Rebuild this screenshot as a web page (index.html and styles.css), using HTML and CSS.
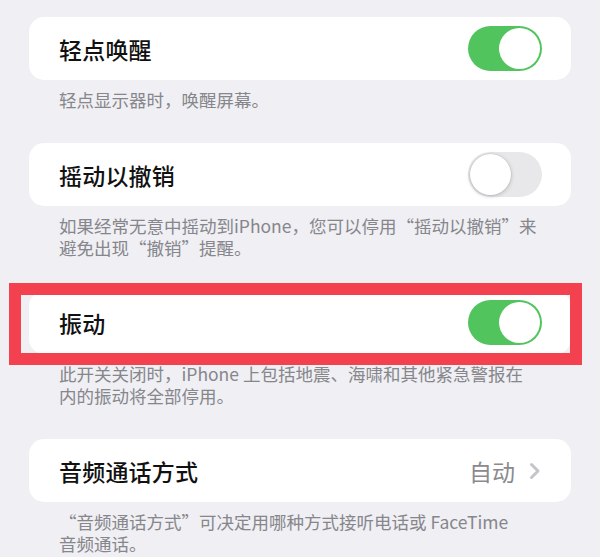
FILE: index.html
```html
<!DOCTYPE html>
<html lang="zh-CN">
<head>
<meta charset="utf-8">
<link rel="stylesheet" href="styles.css">
</head>
<body>
<div class="page">
  <section class="group">
    <div class="card">
      <span class="title">轻点唤醒</span>
      <span class="toggle on"><span class="knob"></span></span>
    </div>
    <p class="footer">轻点显示器时，唤醒屏幕。</p>
  </section>

  <section class="group">
    <div class="card">
      <span class="title">摇动以撤销</span>
      <span class="toggle off"><span class="knob"></span></span>
    </div>
    <p class="footer"><span class="line">如果经常无意中摇动到iPhone，您可以停用“摇动以撤销”来</span><span class="line">避免出现“撤销”提醒。</span></p>
  </section>

  <section class="group">
    <div class="highlight-wrap">
      <div class="card">
        <span class="title">振动</span>
        <span class="toggle on"><span class="knob"></span></span>
      </div>
      <div class="highlight"></div>
    </div>
    <p class="footer"><span class="line">此开关关闭时，iPhone 上包括地震、海啸和其他紧急警报在</span><span class="line">内的振动将全部停用。</span></p>
  </section>

  <section class="group">
    <div class="card">
      <span class="title">音频通话方式</span>
      <span class="detail">
        <span class="value">自动</span>
        <svg class="chevron" width="12" height="18" viewBox="0 0 12 18"><path d="M2.5 2.5 L9 9 L2.5 15.5" fill="none" stroke="#c5c5c8" stroke-width="3" stroke-linecap="round" stroke-linejoin="round"/></svg>
      </span>
    </div>
    <p class="footer"><span class="line">“音频通话方式”可决定用哪种方式接听电话或 FaceTime</span><span class="line">音频通话。</span></p>
  </section>
</div>
</body>
</html>
```

FILE: styles.css
```css
html, body {
  margin: 0;
  padding: 0;
  background: #efeff4;
}
body {
  font-family: "Noto Sans CJK SC", "Noto Sans", sans-serif;
  width: 600px;
  height: 557px;
  overflow: hidden;
}
.page {
  padding: 17px 29px 0 29px;
  display: flex;
  flex-direction: column;
}
.group {
  display: flex;
  flex-direction: column;
  margin-bottom: 32px;
}
.group:last-child {
  margin-bottom: 0;
}
.card {
  background: #ffffff;
  border-radius: 15px;
  height: 63px;
  display: flex;
  align-items: center;
  justify-content: space-between;
  padding: 0 29px 0 30px;
}
.title {
  font-size: 23px;
  font-weight: 500;
  color: #111111;
  letter-spacing: 0.2px;
}
.toggle {
  width: 74px;
  height: 45px;
  border-radius: 23px;
  position: relative;
  flex: none;
}
.toggle.on {
  background: #52c45e;
}
.toggle.off {
  background: #e8e8ea;
}
.knob {
  position: absolute;
  top: 2px;
  width: 41px;
  height: 41px;
  border-radius: 50%;
  background: #ffffff;
}
.toggle.on .knob {
  right: 2px;
}
.toggle.off .knob {
  left: 2px;
  box-shadow: 0 1px 4px rgba(0,0,0,0.22), 0 0 0 0.5px rgba(0,0,0,0.08);
}
.detail {
  display: flex;
  align-items: center;
  gap: 14px;
}
.value {
  font-size: 23px;
  color: #8a8a8e;
}
.chevron {
  display: block;
  margin-right: 1px;
}
.footer {
  margin: 0;
  padding: 9px 30px 0 30px;
  font-size: 17.5px;
  line-height: 22px;
  color: #86868b;
}
.line {
  display: block;
  height: 22px;
  white-space: nowrap;
}
.highlight-wrap {
  position: relative;
}
.highlight {
  position: absolute;
  left: -20px;
  right: -11px;
  top: -8px;
  bottom: -11px;
  border: 12px solid #f3414f;
  pointer-events: none;
}
```
